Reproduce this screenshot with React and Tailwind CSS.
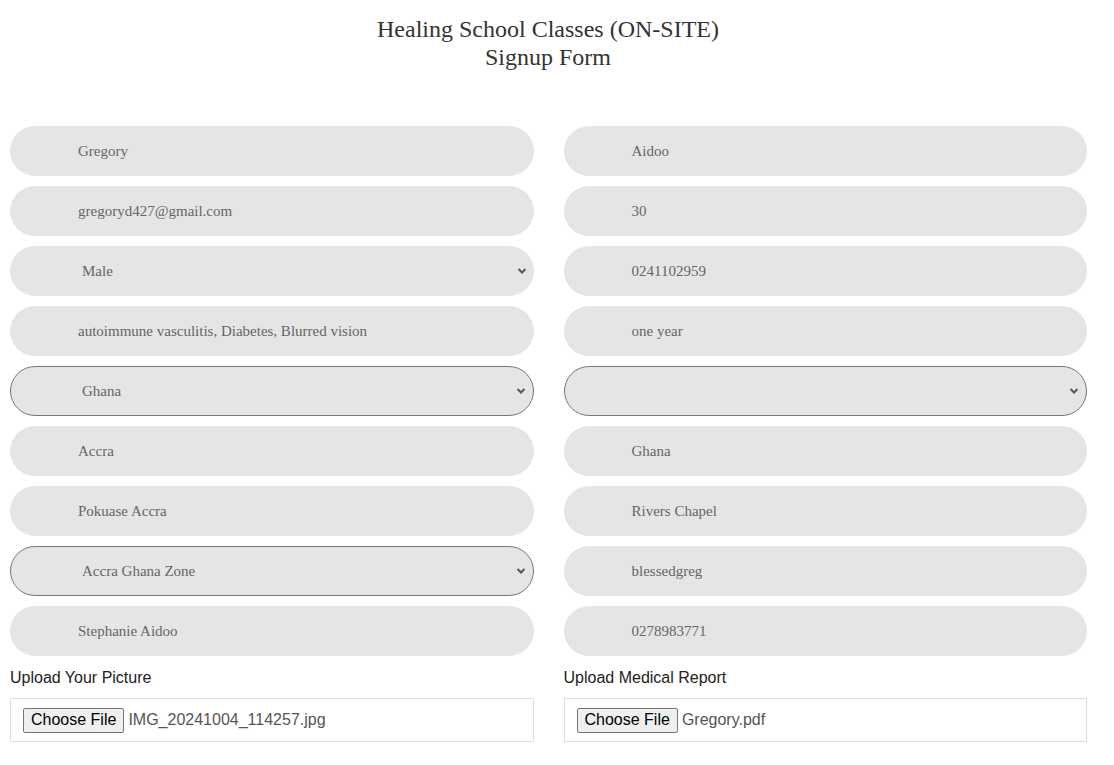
const left = [
  { value: "Gregory" },
  { value: "gregoryd427@gmail.com" },
  { value: "Male", select: true },
  { value: "autoimmune vasculitis, Diabetes, Blurred vision" },
  { value: "Ghana", select: true, bordered: true },
  { value: "Accra" },
  { value: "Pokuase Accra" },
  { value: "Accra Ghana Zone", select: true, bordered: true },
  { value: "Stephanie Aidoo" },
];

const right = [
  { value: "Aidoo" },
  { value: "30" },
  { value: "0241102959" },
  { value: "one year" },
  { value: "", select: true, bordered: true },
  { value: "Ghana" },
  { value: "Rivers Chapel" },
  { value: "blessedgreg" },
  { value: "0278983771" },
];

const Chevron = () => (
  <svg width="10" height="7" viewBox="0 0 10 7" className="absolute right-[7px] top-1/2 -translate-y-1/2">
    <path d="M1.5 1.5 L5 5 L8.5 1.5" fill="none" stroke="#555" strokeWidth="2" />
  </svg>
);

const Field = ({ value, select, bordered }) => (
  <div
    className={`relative h-[50px] rounded-full bg-[#e5e5e5] flex items-center text-[15px] text-[#666] ${
      bordered ? "border border-[#767676]" : ""
    } ${select ? "pl-[72px]" : "pl-[68px]"}`}
  >
    <span className={bordered ? "-ml-px" : ""}>{value}</span>
    {select && <Chevron />}
  </div>
);

const Upload = ({ label, file }) => (
  <div className="mt-[12px]" style={{ fontFamily: "'Liberation Sans', Arial, sans-serif" }}>
    <div className="text-[16px] text-[#222] leading-[20px]">{label}</div>
    <div className="mt-[10px] h-[44px] border border-[#dddddd] flex items-center pl-[12px]">
      <span className="h-[25px] px-[7px] flex items-center text-[16px] text-black bg-[#efefef] border border-[#767676] rounded-[2px]">
        Choose File
      </span>
      <span className="ml-[4px] text-[16px] text-[#555]">{file}</span>
    </div>
  </div>
);

export default function App() {
  return (
    <div className="bg-white min-h-[765px] pt-[15px]" style={{ fontFamily: "'Liberation Serif', 'Times New Roman', serif" }}>
      <h1 className="text-center text-[24px] leading-[28px] text-[#333] pr-[18px]">
        Healing School Classes (ON-SITE)
        <br />
        Signup Form
      </h1>

      <div className="mt-[55px] pl-[10px] w-[1087px] grid grid-cols-2 gap-x-[30px]">
        <div>
          <div className="flex flex-col gap-[10px]">
            {left.map((f, i) => (
              <Field key={i} {...f} />
            ))}
          </div>
          <Upload label="Upload Your Picture" file="IMG_20241004_114257.jpg" />
        </div>
        <div>
          <div className="flex flex-col gap-[10px]">
            {right.map((f, i) => (
              <Field key={i} {...f} />
            ))}
          </div>
          <Upload label="Upload Medical Report" file="Gregory.pdf" />
        </div>
      </div>
    </div>
  );
}
